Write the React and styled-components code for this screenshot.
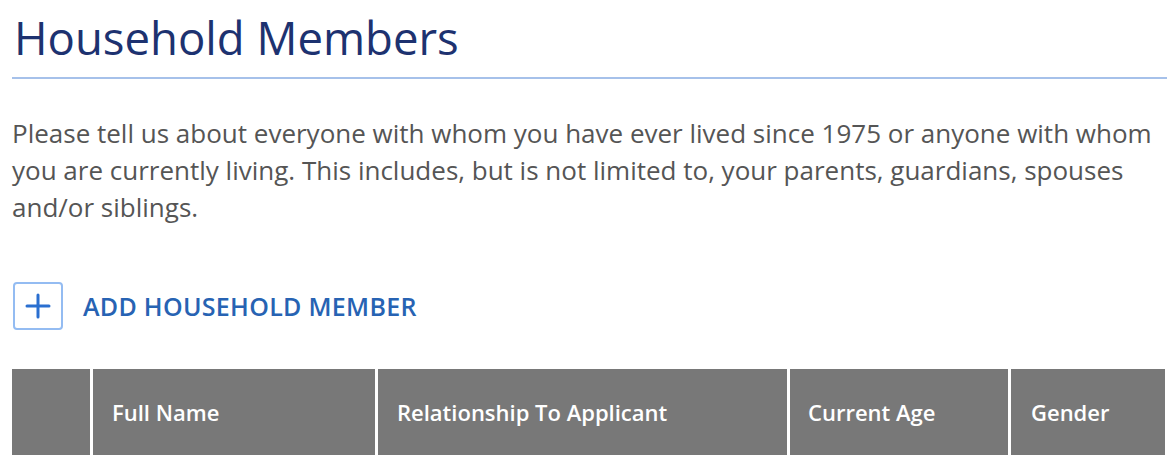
import React from "react";
import styled, { createGlobalStyle } from "styled-components";

const Global = createGlobalStyle`
  html, body { margin: 0; padding: 0; background: #fff; }
  body { font-family: "Open Sans", "Noto Sans", sans-serif; }
`;

const Page = styled.div`
  padding: 0 8px 0 12px;
  width: 1155px;
`;

const Title = styled.h1`
  margin: 0;
  padding: 8px 0 11px 2px;
  font-size: 45.5px;
  line-height: 58px;
  font-weight: 400;
  color: #1d3270;
  border-bottom: 2px solid #a6c1ea;
`;

const Intro = styled.p`
  margin: 36px 0 0 0;
  font-size: 26px;
  line-height: 37px;
  color: #555;
`;

const AddRow = styled.button`
  display: flex;
  align-items: center;
  gap: 20px;
  margin-top: 56px;
  padding: 0 0 0 1px;
  border: 0;
  background: none;
  cursor: pointer;
  font-family: inherit;
`;

const PlusBox = styled.span`
  display: flex;
  align-items: center;
  justify-content: center;
  width: 46px;
  height: 44px;
  border: 2px solid #94bcf2;
  border-radius: 4px;
`;

const AddLabel = styled.span`
  font-size: 25px;
  font-weight: 600;
  color: #2763b3;
  letter-spacing: 0.3px;
`;

const HeaderRow = styled.div`
  display: grid;
  grid-template-columns: 78px 282px 409px 218px 154px;
  column-gap: 3px;
  margin-top: 39px;
`;

const HeadCell = styled.div`
  background: #787878;
  height: 86px;
  display: flex;
  align-items: center;
  padding-left: ${(p) => p.$pad || 19}px;
  color: #fff;
  font-size: 22px;
  font-weight: 600;
`;

export default function App() {
  return (
    <>
      <Global />
      <Page>
        <Title>Household Members</Title>
        <Intro>
          Please tell us about everyone with whom you have ever lived since 1975 or anyone with whom
          you are currently living. This includes, but is not limited to, your parents, guardians,
          spouses and/or siblings.
        </Intro>
        <AddRow type="button">
          <PlusBox>
            <svg width="26" height="26" viewBox="0 0 26 26">
              <path d="M13 2v22M2 13h22" stroke="#2a6fd0" strokeWidth="3" strokeLinecap="round" />
            </svg>
          </PlusBox>
          <AddLabel>ADD HOUSEHOLD MEMBER</AddLabel>
        </AddRow>
        <HeaderRow>
          <HeadCell />
          <HeadCell>Full Name</HeadCell>
          <HeadCell>Relationship To Applicant</HeadCell>
          <HeadCell $pad={18}>Current Age</HeadCell>
          <HeadCell $pad={20}>Gender</HeadCell>
        </HeaderRow>
      </Page>
    </>
  );
}
